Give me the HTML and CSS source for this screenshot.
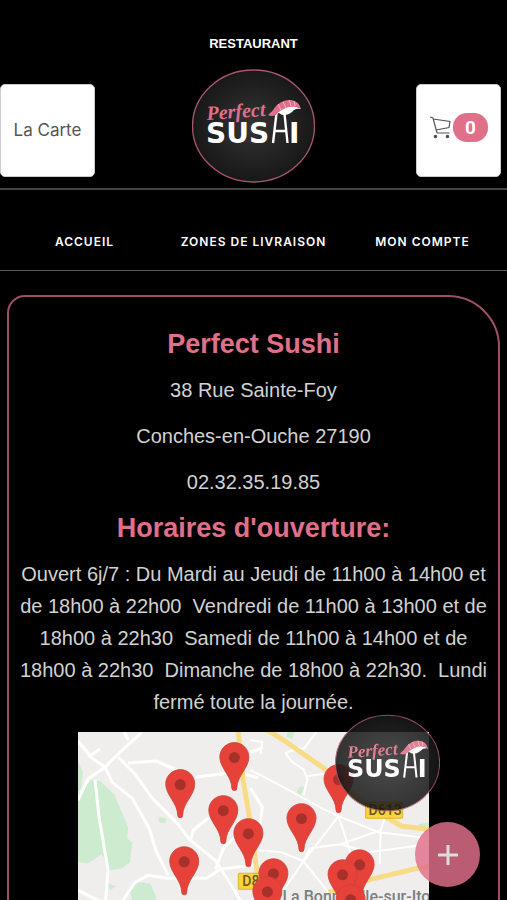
FILE: index.html
```
<!DOCTYPE html>
<html lang="fr">
<head>
    <meta charset="UTF-8">
    <title>Perfect Sushi</title>
    <meta name="viewport" content="width=device-width, initial-scale=1">
    <link rel="stylesheet" href="styles.css">
</head>
<body>
<svg class="defs" aria-hidden="true">
    <defs>
        <radialGradient id="disc">
            <stop offset="0" stop-color="#343434"/>
            <stop offset="1" stop-color="#181818"/>
        </radialGradient>
        <symbol id="logo" viewBox="0 0 123 114">
            <ellipse cx="61.5" cy="57" rx="61" ry="56" fill="url(#disc)" stroke="#a8586c" stroke-width="1.3"/>
            <text class="logo-script" x="15" y="51" transform="rotate(-4 15 51)">Perfect</text>
            <text class="logo-name" x="14" y="74">SUS</text>
            <text class="logo-name" x="97" y="74">I</text>
            <path d="M85 40L81 74M92 40L95.500 74M83 62H94" fill="none" stroke="#fff" stroke-width="2.400"/>
            <path d="M81 46Q85 37 96 35Q104 35 109 40Q103 39 100 43Q93 49 87 44Z" fill="#fff"/>
            <path d="M76 46Q81 42 84 37Q91 30 99 31Q107 32 109 40Q101 36 94 39Q88 41 84 46Q80 48 76 46Z" fill="#e0708a"/>
            <path d="M86 35L89 41M91 33L94 39M97 31L99 37M102 32L103 37" stroke="#f3b3c0" stroke-width="1"/>
        </symbol>
        <symbol id="pin" viewBox="0 0 30 49" overflow="visible">
            <path d="M15 .500C7 .500 .500 7 .500 15C.500 26 12.500 34 12.500 46Q12.500 48.500 15 48.500Q17.500 48.500 17.500 46C17.500 34 29.500 26 29.500 15C29.500 7 23 .500 15 .500Z" fill="#e6423a" stroke="#c5443c" stroke-width=".8"/>
            <circle cx="15" cy="15.500" r="5.500" fill="#a8302a"/>
        </symbol>
    </defs>
</svg>

<header>
    <p class="type">RESTAURANT</p>
    <div class="top">
        <button type="button" class="tile menu">La Carte</button>
        <a href="#" aria-label="Perfect Sushi"><svg class="logo"><use href="#logo"/></svg></a>
        <button type="button" class="tile cart" aria-label="Panier">
            <svg class="cart-icon" viewBox="0 0 24 24" fill="none" stroke="#555" stroke-width="1.200">
                <path d="M1 2L4 3L8 18M4 4L21 6.500L20 12.500L7 15M8 18H20.500"/>
                <circle cx="6.500" cy="21.500" r="1.200" fill="#444"/>
                <circle cx="18.500" cy="21.500" r="1.200" fill="#444"/>
            </svg>
            <span class="badge">0</span>
        </button>
    </div>
</header>

<nav>
    <a href="#">ACCUEIL</a>
    <a href="#">ZONES DE LIVRAISON</a>
    <a href="#">MON COMPTE</a>
</nav>

<main>
    <h2>Perfect Sushi</h2>
    <p>38 Rue Sainte-Foy</p>
    <p>Conches-en-Ouche 27190</p>
    <p>02.32.35.19.85</p>
    <h2>Horaires d'ouverture:</h2>
    <p>Ouvert 6j/7 : Du Mardi au Jeudi de 11h00 à 14h00 et de 18h00 à 22h00&nbsp; Vendredi de 11h00 à 13h00 et de 18h00 à 22h30&nbsp; Samedi de 11h00 à 14h00 et de 18h00 à 22h30&nbsp; Dimanche de 18h00 à 22h30.&nbsp; Lundi fermé toute la journée.</p>
    <svg class="map" viewBox="0 0 351 260" role="img" aria-label="Carte">
        <rect width="351" height="260" fill="#efeeec"/>
        <g fill="#cdeccf">
            <path d="M0 30L5 40L3 56L0 60Z"/>
            <path d="M0 62L13 48L22 49L36 62L43 78L50 95L49 106L54 110L52 130L44 136L32 138L24 122L10 131L0 130Z"/>
            <path d="M51 156L60 150L72 151L78 164L74 180L56 176Z"/>
            <path d="M80 85L88 86L87 91L81 90Z"/>
            <path d="M29 151L38 154L32 158Z"/>
            <path d="M209 0H216L214 7L208 5Z"/>
            <path d="M222 54L226 55L222 63L218 60Z"/>
            <path d="M340 92L351 90V98H342Z"/>
            <path d="M0 190L60 200L90 240L70 260H0Z"/>
        </g>
        <g fill="none" stroke="#fff" stroke-width="3">
            <path d="M0 68L10 47L27 35L40 22L64 0M0 9L14 26L27 35M10 25L22 17M46 0L50 8"/>
            <path d="M27 35L34 50L54 66L71 96L78 119L90 143"/>
            <path d="M40 25L57 42L74 66L98 90L112 108L137 128L150 148L166 175"/>
            <path d="M50 31L78 29L101 39M118 45L160 40L180 46"/>
            <path d="M17 48L21 85L27 120L30 138L27 175"/>
            <path d="M0 158L20 168L40 175L57 150L70 143L90 146H128L142 137L180 132"/>
            <path d="M112 108L115 98L130 86M137 137L146 114L157 105"/>
            <path d="M172 56L184 75L181 96M172 20L184 16"/>
        </g>
        <g fill="none" stroke="#fff" stroke-width="2">
            <path d="M172 38L205 55L245 77L260 84L300 100L351 106"/>
            <path d="M207 21L214 30L225 37L229 47L225 63M207 21L220 16L225 17L238 0M229 44L245 42"/>
            <path d="M172 8L184 10L182 22"/>
            <path d="M260 84L240 110L225 129L205 158L180 180M225 129L250 160L280 190"/>
            <path d="M225 129L232 116L262 112L302 98L309 77M260 84L272 121M302 98L301 132M262 112L290 120L351 112M225 129L203 120L180 118"/>
        </g>
        <g fill="none" stroke="#f8dc85" stroke-width="5">
            <path d="M160 0L165 50L171 84L178 135L188 200L192 260"/>
            <path d="M187 -3L205 8L245 36L289 74L323 94L351 97"/>
            <path d="M250 160L292 147L339 136L351 134"/>
        </g>
        <g class="road-label">
            <rect x="160" y="141" width="36" height="16" rx="1"/>
            <text x="164" y="154">D830</text>
            <rect x="287" y="70" width="37" height="16" rx="1"/>
            <text x="290" y="83">D613</text>
        </g>
        <text class="town" x="204" y="170">La Bonneville-sur-Iton</text>
        <g>
            <use href="#pin" x="141" y="10" width="30" height="49"/>
            <use href="#pin" x="87" y="37" width="30" height="49"/>
            <use href="#pin" x="245" y="32" width="30" height="49"/>
            <use href="#pin" x="130" y="63" width="30" height="49"/>
            <use href="#pin" x="208" y="71" width="30" height="49"/>
            <use href="#pin" x="155" y="86" width="30" height="49"/>
            <use href="#pin" x="91" y="114" width="30" height="49"/>
            <use href="#pin" x="266" y="117" width="30" height="49"/>
            <use href="#pin" x="180" y="126" width="30" height="49"/>
            <use href="#pin" x="249" y="127" width="30" height="49"/>
            <use href="#pin" x="174" y="144" width="30" height="49"/>
            <use href="#pin" x="257" y="152" width="30" height="49"/>
        </g>
    </svg>
</main>

<svg class="float-logo" aria-hidden="true"><use href="#logo"/></svg>
<button type="button" class="fab" aria-label="Ajouter">
    <svg viewBox="0 0 20 20" stroke="#ddd" stroke-width="3"><path d="M10 0V20M0 10H20"/></svg>
</button>
</body>
</html>
```
FILE: styles.css
```
* {
  box-sizing: border-box;
}
html {
  background: #000;
  scrollbar-width: none;
}
body {
  margin: 0;
  background: #000;
  color: #d2d2d2;
  font-family: "Liberation Sans", Arial, sans-serif;
}
h2, p {
  margin: 0;
}
.defs {
  position: absolute;
  width: 0;
  height: 0;
}
header {
  padding-top: 36px;
  padding-bottom: 5px;
  border-bottom: 2px solid #444;
}
.type {
  color: #fff;
  font-size: 13px;
  font-weight: 700;
  line-height: 16px;
  text-align: center;
}
.top {
  display: grid;
  grid-template-columns: 1fr auto 1fr;
  align-items: center;
  margin-top: 17px;
}
.top a {
  display: block;
}
.logo {
  display: block;
  width: 123px;
  height: 114px;
}
.logo-script {
  fill: #e0708a;
  font: italic 700 20px "Liberation Serif", serif;
}
.logo-name {
  fill: #fff;
  font: 700 28px "DejaVu Sans", sans-serif;
}
.tile {
  height: 93px;
  margin-top: 8px;
  padding: 0;
  border: 1px solid #ccc;
  border-radius: 5px;
  background: #fff;
}
.menu {
  width: 95px;
  color: #555;
  font-family: Inter, sans-serif;
  font-size: 17px;
}
.cart {
  display: flex;
  justify-content: center;
  align-items: center;
  justify-self: end;
  width: 85px;
  margin-right: 6px;
  padding-bottom: 6px;
}
.cart-icon {
  width: 24px;
  height: 24px;
}
.badge {
  width: 35px;
  border-radius: 14px;
  background: #e0708a;
  color: #fff;
  font: 700 19px/29px Roboto, sans-serif;
}
nav {
  display: grid;
  grid-template-columns: repeat(3, 1fr);
  padding: 42px 0 18px;
  border-bottom: 1px solid #555;
  text-align: center;
}
nav a {
  color: #fff;
  font: 600 12px/20px Inter, sans-serif;
  letter-spacing: 1px;
  text-decoration: none;
  white-space: nowrap;
}
main {
  margin: 24px 7px;
  padding: 31px 10px 24px;
  border: 2px solid #9c5065;
  border-radius: 18px 52px 18px 18px;
  font-size: 20px;
  line-height: 32px;
  text-align: center;
}
main h2, main p {
  margin-bottom: 14px;
}
main h2 {
  color: #e0708a;
  font-size: 27px;
  line-height: 32px;
}
.map {
  display: block;
  width: 75%;
  margin: 0 auto;
}
.road-label rect {
  fill: #fcd33c;
  stroke: #dcb52c;
}
.road-label text {
  fill: #6b5a1c;
  font: 500 14px Roboto, sans-serif;
}
.town {
  fill: #7b7f84;
  font: 500 16px Roboto, sans-serif;
}
.float-logo {
  position: fixed;
  right: 67px;
  bottom: 88px;
  width: 105px;
  height: 98px;
  opacity: .87;
}
.fab {
  display: flex;
  justify-content: center;
  align-items: center;
  position: fixed;
  right: 27px;
  bottom: 13px;
  width: 65px;
  height: 65px;
  border: 0;
  border-radius: 50%;
  background: #e0708ad4;
}
.fab svg {
  width: 20px;
  height: 20px;
}
```
